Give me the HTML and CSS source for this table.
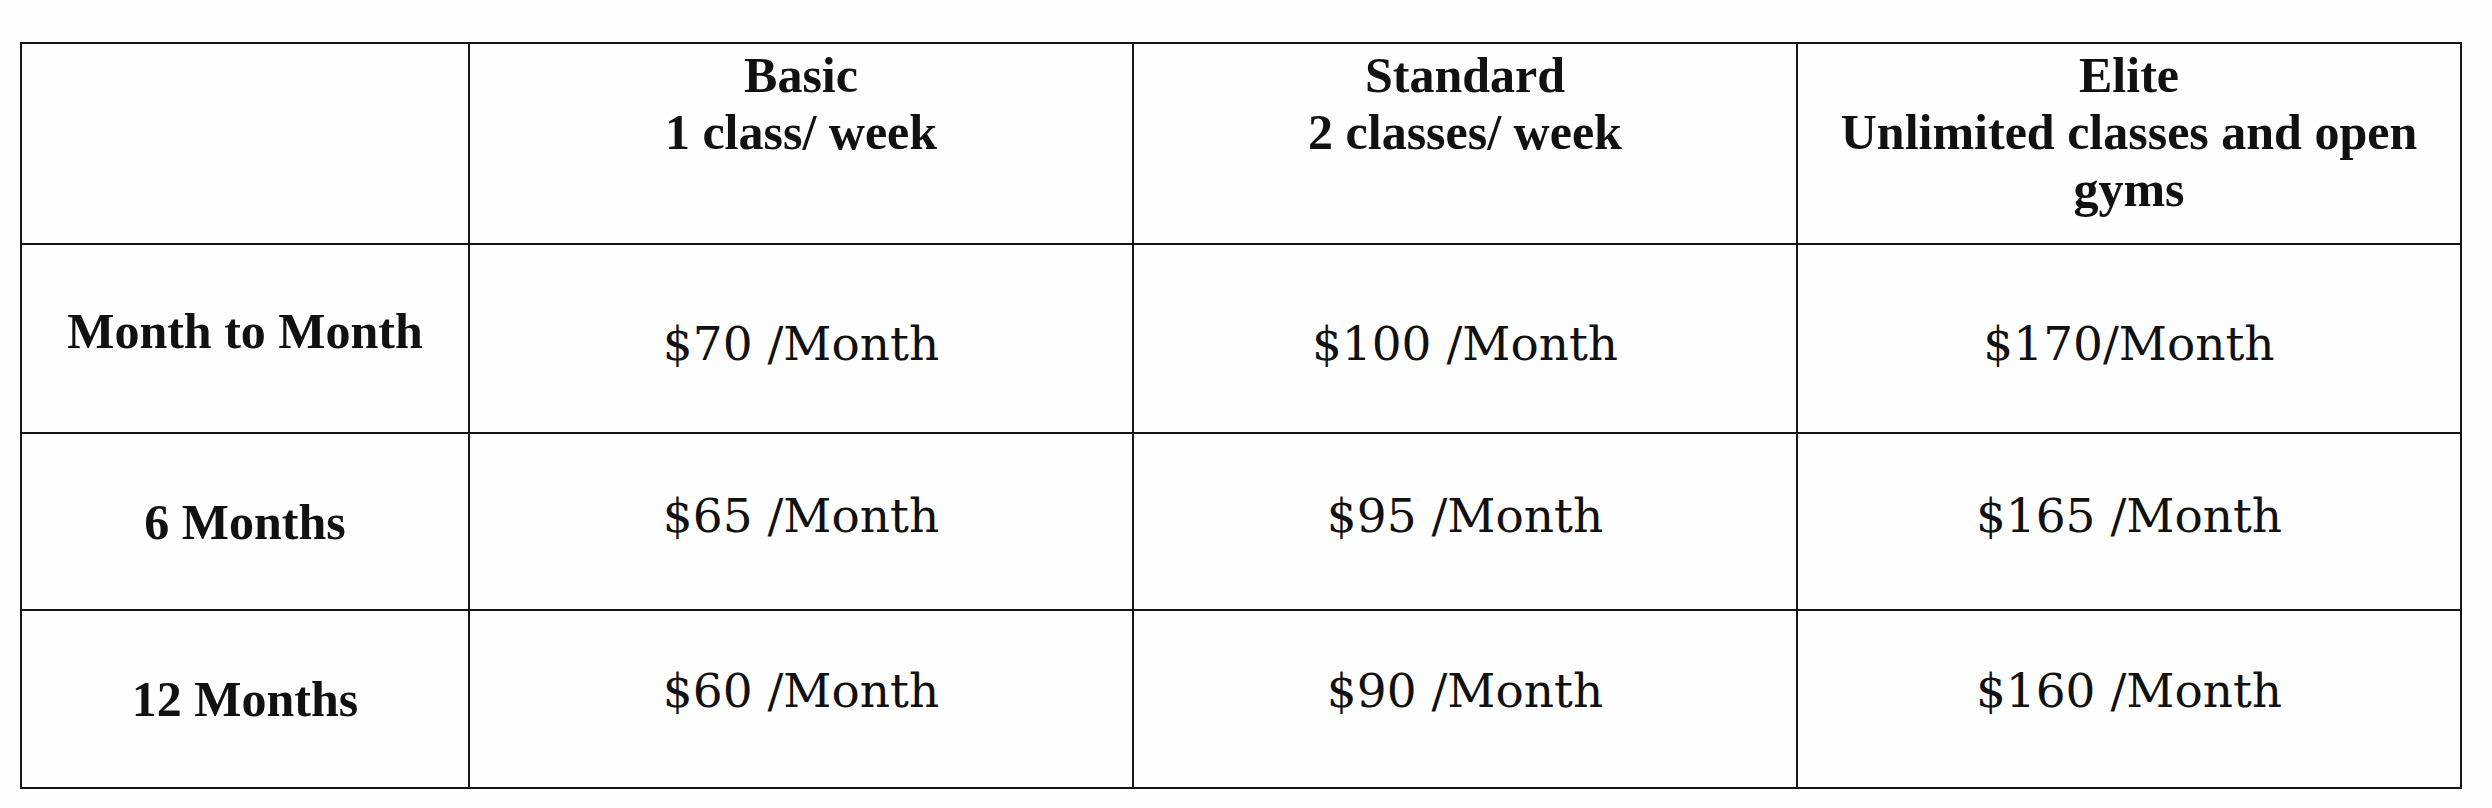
FILE: index.html
```html
<!DOCTYPE html>
<html lang="en">
<head>
<meta charset="utf-8">
<title>Membership Pricing</title>
<link rel="stylesheet" href="styles.css">
</head>
<body>
<table class="pricing">
  <colgroup>
    <col class="col-label">
    <col class="col-plan">
    <col class="col-plan">
    <col class="col-plan">
  </colgroup>
  <thead>
    <tr class="row-head">
      <th class="cell corner"></th>
      <th class="cell plan">Basic<br>1 class/ week</th>
      <th class="cell plan">Standard<br>2 classes/ week</th>
      <th class="cell plan">Elite<br>Unlimited classes and open gyms</th>
    </tr>
  </thead>
  <tbody>
    <tr class="row-1">
      <th class="cell term term-up">Month to Month</th>
      <td class="cell price price-down">$70 /Month</td>
      <td class="cell price price-down">$100 /Month</td>
      <td class="cell price price-down">$170/Month</td>
    </tr>
    <tr class="row-2">
      <th class="cell term">6 Months</th>
      <td class="cell price price-up">$65 /Month</td>
      <td class="cell price price-up">$95 /Month</td>
      <td class="cell price price-up">$165 /Month</td>
    </tr>
    <tr class="row-3">
      <th class="cell term">12 Months</th>
      <td class="cell price price-up2">$60 /Month</td>
      <td class="cell price price-up2">$90 /Month</td>
      <td class="cell price price-up2">$160 /Month</td>
    </tr>
  </tbody>
</table>
</body>
</html>
```

FILE: styles.css
```css
html, body {
  margin: 0;
  padding: 0;
  background: #fefefe;
}

body {
  padding: 42px 0 0 20px;
  color: #111;
}

.pricing {
  border-collapse: collapse;
  table-layout: fixed;
  width: 2442px;
}

.col-label { width: 448px; }
.col-plan { width: 664px; }

.cell {
  border: 2px solid #151515;
  text-align: center;
  padding: 0 8px;
}

.row-head { height: 201px; }
.row-1 { height: 189px; }
.row-2 { height: 177px; }
.row-3 { height: 178px; }

.cell.plan {
  vertical-align: top;
  padding-top: 3px;
  font-family: "Liberation Serif", serif;
  font-weight: 700;
  font-size: 50px;
  line-height: 57px;
}

.cell.term {
  vertical-align: middle;
  font-family: "Liberation Serif", serif;
  font-weight: 700;
  font-size: 50px;
  line-height: 56px;
}

.cell.term-up { padding-bottom: 16px; }

.cell.price {
  vertical-align: middle;
  font-family: "DejaVu Serif", serif;
  font-weight: 400;
  font-size: 47px;
  line-height: 56px;
}

.cell.price-down { padding-top: 10px; }
.cell.price-up { padding-bottom: 12px; }
.cell.price-up2 { padding-bottom: 16px; }
```
